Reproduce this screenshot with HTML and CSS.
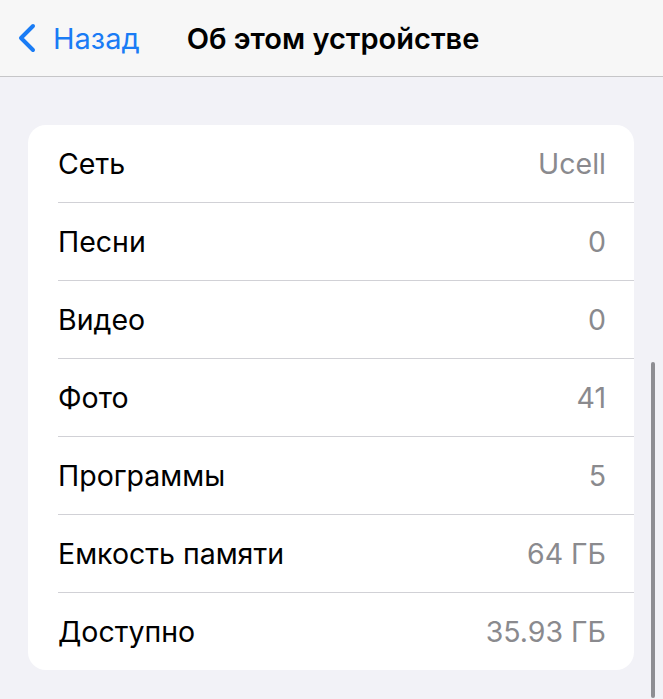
FILE: index.html
```html
<!DOCTYPE html>
<html lang="ru">
<head>
    <meta charset="UTF-8">
    <meta name="viewport" content="width=device-width, initial-scale=1.0">
    <title>Об этом устройстве</title>
    <link rel="stylesheet" href="styles.css">
</head>
<body>
<header class="nav-bar">
    <a class="back" href="#">
        <svg class="chevron" width="22" height="30" viewBox="0 0 22 30">
            <path d="M17 3 L5 15 L17 27" fill="none" stroke="currentColor" stroke-width="4" stroke-linecap="round" stroke-linejoin="round"/>
        </svg>
        <span>Назад</span>
    </a>
    <h1 class="title">Об этом устройстве</h1>
</header>

<main class="content">
    <ul class="info-list">
        <li class="info-row"><span class="label">Сеть</span><span class="value">Ucell</span></li>
        <li class="info-row"><span class="label">Песни</span><span class="value">0</span></li>
        <li class="info-row"><span class="label">Видео</span><span class="value">0</span></li>
        <li class="info-row"><span class="label">Фото</span><span class="value">41</span></li>
        <li class="info-row"><span class="label">Программы</span><span class="value">5</span></li>
        <li class="info-row"><span class="label">Емкость памяти</span><span class="value">64 ГБ</span></li>
        <li class="info-row"><span class="label">Доступно</span><span class="value">35.93 ГБ</span></li>
    </ul>
    <div class="scroll-indicator"></div>
</main>
</body>
</html>
```

FILE: styles.css
```css
html, body {
    margin: 0;
    padding: 0;
    height: 100%;
    overflow: hidden;
}

body {
    font-family: Inter, "Noto Sans", sans-serif;
    background-color: #f2f2f7;
    color: #000;
}

/* Navigation bar */
.nav-bar {
    height: 77px;
    display: flex;
    align-items: center;
    background-color: #f7f7f7;
    border-bottom: 1px solid #c6c6c8;
    padding: 0 0 0 16px;
    box-sizing: border-box;
}

.back {
    display: flex;
    align-items: center;
    gap: 15px;
    color: #1a7cf5;
    text-decoration: none;
    font-size: 29px;
}

.chevron {
    display: block;
}

.title {
    margin: 0 0 0 47px;
    font-size: 29px;
    font-weight: 600;
}

/* Content */
.content {
    position: relative;
    height: calc(100% - 78px);
    padding: 48px 29px 0 28px;
    box-sizing: border-box;
}

.info-list {
    list-style: none;
    margin: 0;
    padding: 0 0 0 30px;
    background-color: #fff;
    border-radius: 18px;
}

.info-row {
    height: 77px;
    display: flex;
    align-items: center;
    justify-content: space-between;
    padding-right: 28px;
    border-bottom: 1px solid #d1d1d6;
    font-size: 28.5px;
}

.info-row:last-child {
    border-bottom: none;
}

.value {
    color: #8a8a8e;
}

.scroll-indicator {
    position: absolute;
    right: 8px;
    top: 285px;
    bottom: 0;
    width: 4px;
    border-radius: 2px;
    background-color: #8e8e93;
}
```
